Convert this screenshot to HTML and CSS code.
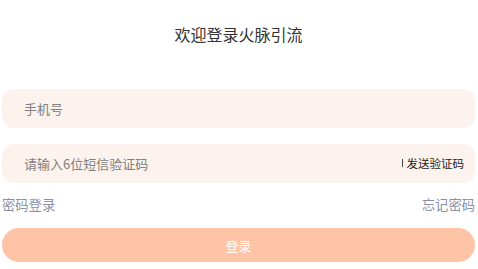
FILE: index.html
```html
<!DOCTYPE html>
<html>
<head>
<meta charset="utf-8">
<link rel="stylesheet" href="styles.css">
</head>
<body>
<div class="page">
  <h1 class="title">欢迎登录火脉引流</h1>
  <div class="field">
    <span class="placeholder">手机号</span>
  </div>
  <div class="field field-code">
    <span class="placeholder">请输入6位短信验证码</span>
    <span class="send"><span class="bar"></span>发送验证码</span>
  </div>
  <div class="links">
    <span class="link">密码登录</span>
    <span class="link">忘记密码</span>
  </div>
  <div class="btn">登录</div>
</div>
</body>
</html>
```
FILE: styles.css
```css
* { box-sizing: border-box; margin: 0; padding: 0; }
html, body { background: #fff; }
body { font-family: "Noto Sans CJK SC", "Noto Sans", sans-serif; }
.page {
  width: 478px;
  padding: 0 3px 0 2px;
  display: flex;
  flex-direction: column;
}
.title {
  font-size: 16px;
  font-weight: 400;
  color: #333;
  text-align: center;
  margin-top: 22px;
  height: 24px;
  line-height: 24px;
}
.field {
  margin-top: 43px;
  height: 39px;
  border-radius: 12px;
  background: #fdf3ee;
  display: flex;
  align-items: center;
  justify-content: space-between;
  padding: 0 11px 1px 22px;
}
.field-code { margin-top: 16px; }
.placeholder {
  font-size: 13px;
  color: #808080;
}
.send {
  font-size: 11.5px;
  color: #222;
  display: flex;
  align-items: center;
}
.bar {
  width: 1px;
  height: 8px;
  background: #444;
  margin-right: 4px;
}
.links {
  margin-top: 12px;
  display: flex;
  justify-content: space-between;
  font-size: 13.3px;
  color: #8a90a6;
  height: 20px;
  line-height: 20px;
}
.btn {
  margin-top: 13px;
  height: 34px;
  border-radius: 17px;
  background: #ffc3a6;
  color: #fff;
  font-size: 13px;
  display: flex;
  align-items: center;
  justify-content: center;
}
```
